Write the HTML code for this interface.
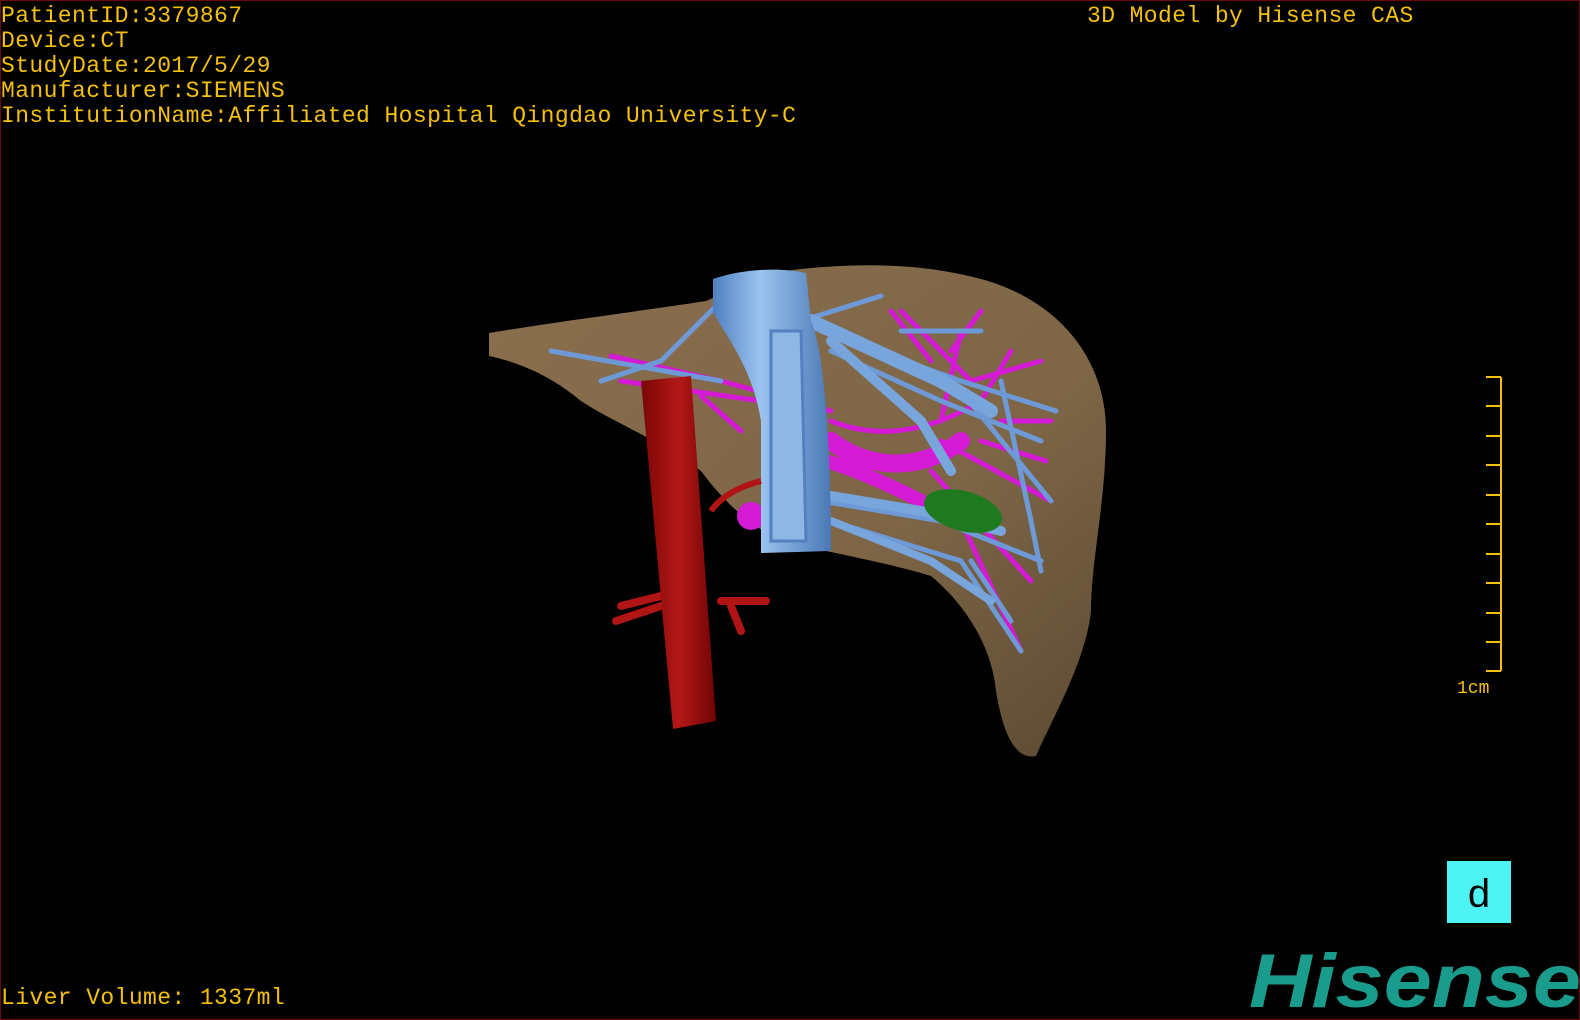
<!DOCTYPE html>
<html><head><meta charset="utf-8"><style>
html,body{margin:0;padding:0;background:#000;}
#c{position:relative;width:1578px;height:1018px;border:1px solid #6b0a0a;overflow:hidden;background:#000;}
.t{position:absolute;color:#f5c00a;font-family:"Liberation Mono",monospace;font-size:23px;line-height:25px;white-space:pre;letter-spacing:0.4px;}
</style></head><body><div id="c">
<div class="t" style="left:0;top:3px">PatientID:3379867
Device:CT
StudyDate:2017/5/29
Manufacturer:SIEMENS
InstitutionName:Affiliated Hospital Qingdao University-C</div>
<div class="t" style="left:1086px;top:3px">3D Model by Hisense CAS</div>
<div class="t" style="left:0;top:985px">Liver Volume: 1337ml</div>
<svg width="1580" height="1020" style="position:absolute;left:0;top:0">
<defs>
<linearGradient id="lv" x1="0" y1="0" x2="1" y2="1"><stop offset="0" stop-color="#8a6f4e"/><stop offset="0.6" stop-color="#7d6546"/><stop offset="1" stop-color="#5c4a33"/></linearGradient>
<linearGradient id="bl" x1="0" x2="1"><stop offset="0" stop-color="#4f7fbf"/><stop offset="0.4" stop-color="#9cc4f0"/><stop offset="1" stop-color="#4b78b5"/></linearGradient>
<linearGradient id="rd" x1="0" x2="1"><stop offset="0" stop-color="#7a0606"/><stop offset="0.5" stop-color="#b41818"/><stop offset="1" stop-color="#700404"/></linearGradient>
</defs>
<path d="M488 332 C560 320 640 310 705 300 C740 285 760 272 800 268 C860 262 920 262 980 278 C1060 300 1105 360 1105 430 C1105 500 1090 560 1090 610 C1085 660 1050 720 1035 755 C1010 760 1000 720 995 690 C990 640 960 600 930 575 C880 560 830 552 780 540 C740 520 715 490 700 470 C660 440 610 420 580 400 C550 375 520 362 488 355 Z" fill="url(#lv)"/>
<g fill="none" stroke-linecap="round">
<g stroke="#d41ad4" stroke-width="5">
<path d="M610 355 L720 380 L830 410"/><path d="M620 380 L760 400"/><path d="M700 395 L740 430"/>
<path d="M830 420 C880 440 930 430 980 400 L1010 350"/><path d="M940 420 L960 330"/><path d="M900 310 L970 380 L1040 360"/>
<path d="M940 440 L1050 500"/><path d="M980 440 L1045 460"/><path d="M930 470 L1030 580"/><path d="M960 520 L1020 650"/>
<path d="M950 350 L980 310"/><path d="M1000 420 L1050 420"/><path d="M890 310 L930 360"/>
</g>
<path d="M830 440 C870 470 920 470 960 440" stroke="#d41ad4" stroke-width="18"/>
<path d="M825 460 C860 470 900 490 920 500" stroke="#d41ad4" stroke-width="14"/>
<ellipse cx="750" cy="515" rx="14" ry="14" fill="#d41ad4" stroke="none"/>
<g stroke="#6d9ad6" stroke-width="5">
<path d="M550 350 L720 380"/><path d="M720 300 L660 360 L600 380"/><path d="M800 320 L880 295"/><path d="M820 330 L960 380 L1055 410"/>
<path d="M830 350 L940 400 L1040 440"/><path d="M960 390 L1050 500"/><path d="M1000 380 L1030 520 L1040 570"/>
<path d="M820 500 L940 520 L1040 560"/><path d="M830 520 L960 560 L1020 650"/><path d="M970 560 L1010 620"/><path d="M900 330 L980 330"/>
</g>
<path d="M810 320 L940 380 L990 410" stroke="#79a5dd" stroke-width="14"/>
<path d="M830 340 L920 420 L950 470" stroke="#79a5dd" stroke-width="10"/>
<path d="M830 495 L920 510 L1000 530" stroke="#79a5dd" stroke-width="10"/>
<path d="M830 520 L930 560 L990 600" stroke="#79a5dd" stroke-width="8"/>
</g>
<ellipse cx="962" cy="510" rx="40" ry="20" fill="#1f7a1f" transform="rotate(15 962 510)"/>
<path d="M712 278 C740 268 780 266 805 272 L810 320 C820 340 830 420 830 550 L760 552 L760 420 C750 360 720 330 712 310 Z" fill="url(#bl)"/>
<path d="M770 330 L800 330 L805 540 L770 540 Z" fill="#8fb7e6" stroke="#5380bf" stroke-width="3"/>
<path d="M620 605 L660 595 M615 620 L660 605 M720 600 L765 600 M730 605 L740 630" stroke="#b01414" stroke-width="8" stroke-linecap="round"/>
<path d="M710 510 C720 495 740 485 760 480" stroke="#b01414" stroke-width="6" fill="none"/>
<path d="M640 380 L690 375 L715 720 L672 728 Z" fill="url(#rd)"/>
<g stroke="#f5c00a" stroke-width="2" fill="none">
<path d="M1500 376 L1500 670"/>
<path d="M1485 376 H1500 M1485 405 H1500 M1485 435 H1500 M1485 464 H1500 M1485 494 H1500 M1485 523 H1500 M1485 553 H1500 M1485 582 H1500 M1485 612 H1500 M1485 641 H1500 M1485 670 H1500"/>
</g>
<text x="1456" y="692" fill="#f5c00a" font-family="Liberation Mono,monospace" font-size="18">1cm</text>
<rect x="1446" y="860" width="64" height="62" fill="#4df2f2"/>
<text x="1478" y="906" fill="#000" font-family="Liberation Sans,sans-serif" font-size="40" text-anchor="middle">d</text>
<text x="1248" y="1006" fill="#1a9c8c" font-family="Liberation Sans,sans-serif" font-weight="bold" font-style="italic" font-size="76" textLength="332" lengthAdjust="spacingAndGlyphs">Hisense</text>
</svg>
</div></body></html>
